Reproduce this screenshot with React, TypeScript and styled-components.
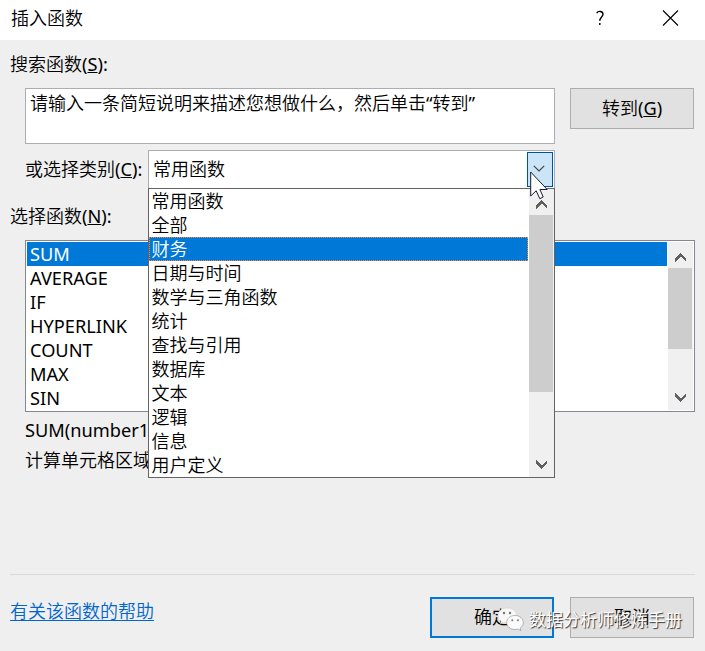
import React from "react";
import styled, { createGlobalStyle } from "styled-components";

const Global = createGlobalStyle`
  * { box-sizing: border-box; }
  body { margin: 0; background: #efefef; overflow: hidden; }
`;

const Dialog = styled.div`
  width: 705px;
  height: 651px;
  position: relative;
  background: #efefef;
  color: #000;
  font: 350 18px/22px "Noto Sans", "Noto Sans CJK SC", sans-serif;
  white-space: nowrap;
  overflow: hidden;
`;

const Latin = styled.span`
  font-weight: 400;
  font-size: 18.2px;
`;

const Cjk = styled.span`
  font-family: "Noto Sans CJK SC", sans-serif;
`;

const TitleBar = styled.header`
  height: 40px;
  display: flex;
  align-items: center;
  padding: 0 26px 4px 11px;
  background: #fff;
`;

const Title = styled.h1`
  flex: 1;
  margin: 0;
  font: inherit;
`;

const TitleIcon = styled.svg`
  width: 18px;
  height: 18px;
  margin-left: 52px;
`;

const Body = styled.main`
  display: flex;
  flex-direction: column;
  padding: 0 10px;
`;

const Label = styled.div<{ $top: number; $bottom: number; $indent?: number }>`
  height: 24px;
  margin: ${(p) => p.$top}px 0 ${(p) => p.$bottom}px ${(p) => p.$indent ?? 0}px;
`;

const Summary = styled(Label)`
  width: 127px;
  overflow: hidden;
`;

const Row = styled.div`
  display: flex;
  align-items: flex-start;
  gap: 15px;
  padding-left: 15px;
`;

const SearchBox = styled.div`
  width: 530px;
  height: 56px;
  padding: 3px 4px;
  border: 1px solid #abadb3;
  background: #fff;
`;

const Button = styled.button<{ $primary?: boolean }>`
  width: 124px;
  height: 41px;
  padding: 0 0 1px;
  border: ${(p) => (p.$primary ? "2px solid #0078d7" : "1px solid #adadad")};
  background: #e1e1e1;
  color: #000;
  font: inherit;
`;

const CategoryRow = styled.div`
  display: flex;
  align-items: center;
  height: 39px;
  margin-top: 6px;
  padding-left: 15px;
`;

const CategoryLabel = styled.div`
  width: 123px;
  padding-bottom: 2px;
`;

const Combo = styled.div`
  position: relative;
  display: flex;
  width: 407px;
  height: 39px;
  padding: 1px 1px 1px 4px;
  border: 1px solid #abadb3;
  background: #fff;
`;

const ComboValue = styled.div`
  flex: 1;
  line-height: 35px;
`;

const ComboButton = styled.div`
  display: flex;
  align-items: center;
  justify-content: center;
  width: 26px;
  height: 35px;
  padding: 0 2px 2px 0;
  border: 1px solid #005499;
  background: #cce4f7;
`;

const Popup = styled.div`
  position: absolute;
  z-index: 2;
  left: -1px;
  top: 37px;
  display: flex;
  width: 407px;
  height: 290px;
  border: 1px solid #646464;
  background: #fff;
`;

const Options = styled.ul`
  flex: 1;
  margin: 0;
  padding: 0;
  list-style: none;
`;

const Option = styled.li<{ $selected?: boolean }>`
  height: 24px;
  padding-left: 2.5px;
  color: ${(p) => (p.$selected ? "#fff" : "#000")};
  background: ${(p) => (p.$selected ? "#0078d7" : "transparent")};
  outline: ${(p) => (p.$selected ? "1px dotted #ff8728" : "none")};
  outline-offset: -1px;
`;

const Track = styled.div`
  display: flex;
  flex-direction: column;
  width: 25px;
  height: 100%;
  margin-left: 1px;
  background: #f0f0f0;
`;

const ScrollButton = styled.div<{ $up?: boolean }>`
  display: flex;
  align-items: center;
  justify-content: center;
  height: 26px;
  padding-top: ${(p) => (p.$up ? 4 : 0)}px;
`;

const Thumb = styled.div<{ $height: number }>`
  width: 24px;
  height: ${(p) => p.$height}px;
  margin-bottom: auto;
  background: #cdcdcd;
`;

const ListBox = styled.div`
  display: flex;
  width: 670px;
  height: 172px;
  margin-left: 15px;
  padding: 1px;
  border: 1px solid #828790;
  background: #fff;
`;

const FunctionItem = styled.li<{ $selected?: boolean }>`
  height: 24px;
  padding-left: 3px;
  line-height: 24px;
  color: ${(p) => (p.$selected ? "#fff" : "#000")};
  background: ${(p) => (p.$selected ? "#0078d7" : "transparent")};
`;

const Divider = styled.hr`
  width: 685px;
  height: 1px;
  margin: 101px 0 22px;
  border: 0;
  background: #d9d9d9;
`;

const Footer = styled.footer`
  display: flex;
  gap: 16px;
`;

const HelpLink = styled.a`
  width: 404px;
  padding-top: 3px;
  color: #0066cc;
  text-decoration: underline;
  text-decoration-thickness: 1px;
  text-underline-offset: 2px;
  text-decoration-skip-ink: none;
`;

const Pointer = styled.svg`
  position: absolute;
  z-index: 3;
  left: 530px;
  top: 171px;
`;

const Watermark = styled.div`
  position: absolute;
  z-index: 4;
  left: 497px;
  top: 605px;
  display: flex;
  gap: 5px;
  color: #fff;
  font: 400 17px/28px "Noto Sans CJK SC", sans-serif;
  text-shadow: 1px 1px 1px #333;
`;

const Chevron = ({ down }: { down?: boolean }) => (
  <svg width="11" height="9" viewBox="0 0 11 9" shapeRendering="crispEdges">
    <path
      d={down ? "M0 0 5.5 5.5 11 0V3.5L5.5 9 0 3.5Z" : "M0 9 5.5 3.5 11 9V5.5L5.5 0 0 5.5Z"}
      fill="#606060"
    />
  </svg>
);

const Scrollbar = ({ thumb }: { thumb: number }) => (
  <Track>
    <ScrollButton $up><Chevron /></ScrollButton>
    <Thumb $height={thumb} />
    <ScrollButton><Chevron down /></ScrollButton>
  </Track>
);

const Key = ({ letter }: { letter: string }) => (
  <Latin>(<u>{letter}</u>):</Latin>
);

const categories = [
  "常用函数", "全部", "财务", "日期与时间", "数学与三角函数", "统计",
  "查找与引用", "数据库", "文本", "逻辑", "信息", "用户定义",
];

const functions = ["SUM", "AVERAGE", "IF", "HYPERLINK", "COUNT", "MAX", "SIN"];

export default function App() {
  return (
    <Dialog>
      <Global />
      <TitleBar>
        <Title>插入函数</Title>
        <TitleIcon viewBox="0 0 18 18" fill="none" stroke="#000" strokeWidth="1.4">
          <path d="M5.7 4.2C7 1.5 12 1.9 12 5.2C12 8 8.8 8 8.800 11.800M8.800 14v2" />
        </TitleIcon>
        <TitleIcon viewBox="0 0 18 18" fill="none" stroke="#000" strokeWidth="1.1">
          <path d="M2 1.500 17 16.500M17 1.500 2 16.500" />
        </TitleIcon>
      </TitleBar>
      <Body>
        <Label $top={13} $bottom={11}>搜索函数<Key letter="S" /></Label>
        <Row>
          <SearchBox>请输入一条简短说明来描述您想做什么，然后单击<Latin>“</Latin>转到<Latin>”</Latin></SearchBox>
          <Button>转到<Latin>(<u>G</u>)</Latin></Button>
        </Row>
        <CategoryRow>
          <CategoryLabel>或选择类别<Key letter="C" /></CategoryLabel>
          <Combo>
            <ComboValue>常用函数</ComboValue>
            <ComboButton>
              <svg width="12" height="7" viewBox="0 0 12 7" fill="none" stroke="#444" strokeWidth="1.2">
                <path d="M.8 .8 6 6 11.2 .8" />
              </svg>
            </ComboButton>
            <Popup>
              <Options>
                {categories.map((name) => (
                  <Option key={name} $selected={name === "财务"}><Cjk>{name}</Cjk></Option>
                ))}
              </Options>
              <Scrollbar thumb={177} />
            </Popup>
          </Combo>
        </CategoryRow>
        <Label $top={16} $bottom={11}>选择函数<Key letter="N" /></Label>
        <ListBox>
          <Options>
            {functions.map((name) => (
              <FunctionItem key={name} $selected={name === "SUM"}><Latin>{name}</Latin></FunctionItem>
            ))}
          </Options>
          <Scrollbar thumb={81} />
        </ListBox>
        <Summary $top={7} $bottom={6} $indent={15}><Latin>SUM(number1</Latin></Summary>
        <Summary $top={0} $bottom={0} $indent={15}>计算单元格区域</Summary>
        <Divider />
        <Footer>
          <HelpLink>有关该函数的帮助</HelpLink>
          <Button $primary>确定</Button>
          <Button>取消</Button>
        </Footer>
      </Body>
      <Pointer width="20" height="30" viewBox="0 0 20 30">
        <path
          d="M.7 1V25L6.2 19.8 9.8 27.7 13.2 26 9.900 18.500H17.200Z"
          fill="#fff" stroke="#1b1b30" strokeWidth="1"
        />
      </Pointer>
      <Watermark>
        <svg width="27" height="30" viewBox="0 0 27 30">
          <path d="M10 3C4.500 3 1 6.300 1 10.300c0 2.400 1.200 4.400 3.200 5.800L3.400 19l3.200-1.700c1.100.3 2.200.4 3.400.4 5.500 0 9.500-3.300 9.500-7.400S15.500 3 10 3Z" fill="#f8f8f8" stroke="#ccc" strokeWidth=".5" />
          <path d="M18 10.500c-4.700 0-8.300 3-8.300 7s3.600 7 8.300 7c1 0 2-.2 2.900-.5l3 1.700-.7-2.700c1.900-1.300 3.100-3.200 3.100-5.500 0-4-3.600-7-8.300-7Z" fill="#fcfcfc" stroke="#888" strokeWidth=".6" />
          <g fill="#777">
            <circle cx="7" cy="8" r="1.200" /><circle cx="13" cy="8" r="1.200" />
            <circle cx="15.300" cy="15.300" r="1" /><circle cx="21" cy="15.300" r="1" />
          </g>
        </svg>
        <span>数据分析师修炼手册</span>
      </Watermark>
    </Dialog>
  );
}
